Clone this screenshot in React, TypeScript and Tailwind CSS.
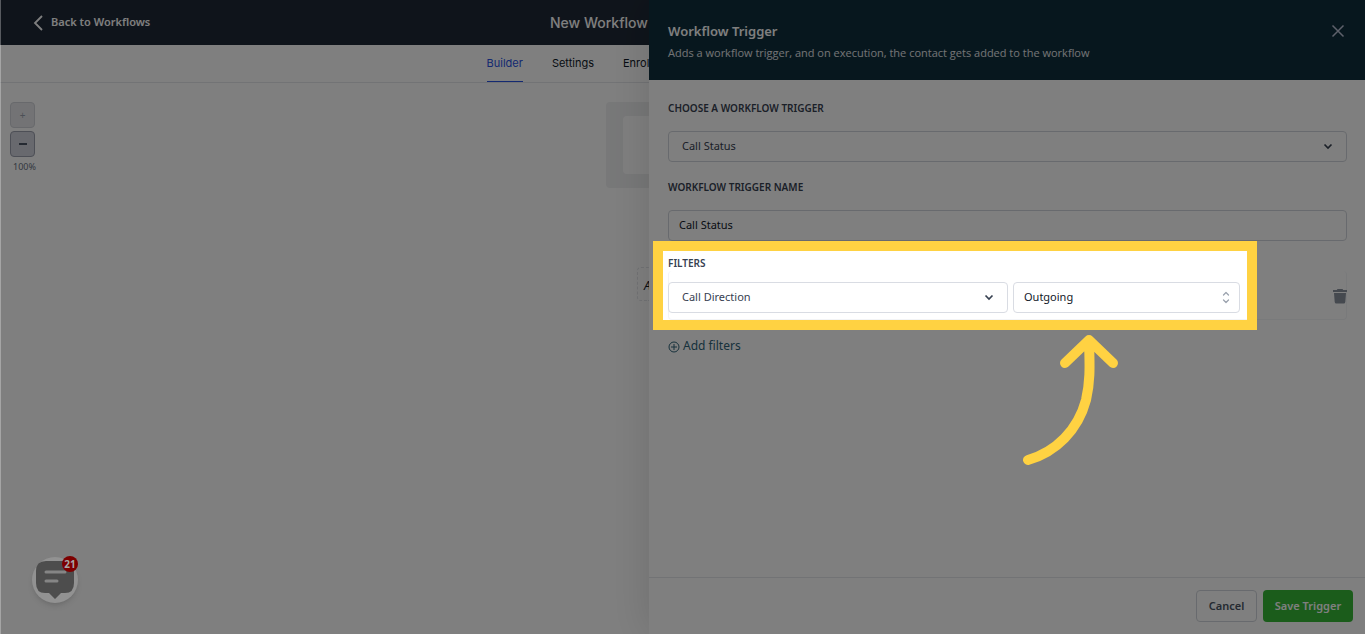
import { useState } from "react";
import type { ReactNode } from "react";

const tabs = ["Builder", "Settings"];

function ChevronDown() {
  return (
    <svg
      viewBox="0 0 10 10"
      className="pointer-events-none absolute right-3.5 top-2.5 size-2.5"
      fill="none"
      stroke="#374151"
      strokeWidth="1.7"
      aria-hidden="true"
    >
      <path d="M1.500 3.500L5 7l3.500-3.500" />
    </svg>
  );
}

function ChevronUpDown() {
  return (
    <svg
      viewBox="0 0 8 14"
      className="pointer-events-none absolute right-2.5 top-2 h-3.5 w-2"
      fill="none"
      stroke="#9ca3af"
      strokeWidth="1.3"
      strokeLinecap="round"
      strokeLinejoin="round"
      aria-hidden="true"
    >
      <path d="M1.500 5L4 2.500 6.500 5M1.500 10L4 12.500 6.500 10" />
    </svg>
  );
}

function Label({ htmlFor, children }: { htmlFor: string; children: ReactNode }) {
  return (
    <label
      htmlFor={htmlFor}
      className="block text-[10px] font-semibold uppercase leading-4 text-[#374151]"
    >
      {children}
    </label>
  );
}

function Workspace() {
  const [active, setActive] = useState("Builder");

  return (
    <main className="relative flex min-w-0 flex-1 flex-col overflow-hidden bg-white">
      <header className="flex h-[45px] items-center justify-between bg-[#1f2937] pl-[33px] text-white">
        <a href="#workflows" className="flex items-center gap-2 text-[11px] font-semibold">
          <svg viewBox="0 0 10 16" className="h-4 w-2.5" fill="none" stroke="currentColor" strokeWidth="1.8" aria-hidden="true">
            <path d="M9 1L2 8l7 7" />
          </svg>
          Back to Workflows
        </a>
        <h1 className="w-[99px] whitespace-nowrap font-[Inter,sans-serif] text-sm font-medium">
          New Workflow
        </h1>
      </header>

      <nav className="flex h-[38px] justify-end border-b border-gray-200 font-[Inter,sans-serif] text-[11px]">
        {tabs.map((tab) => (
          <button
            key={tab}
            onClick={() => setActive(tab)}
            className={
              active === tab
                ? "mr-[29px] border-b border-[#2952e3] text-[#2952e3]"
                : "mr-[29px] border-b border-transparent text-gray-900"
            }
          >
            {tab}
          </button>
        ))}
        <button className="w-[26px] overflow-hidden whitespace-nowrap text-left text-gray-900">
          Enrol
        </button>
      </nav>

      <div className="flex flex-1 items-start justify-between pl-2.5 pt-[19px]">
        <div className="flex flex-col gap-[3px]">
          <button
            aria-label="Zoom in"
            disabled
            className="flex h-[26px] w-[25px] items-center justify-center rounded-sm border border-[#d0d2d8] bg-[#e6e7ea] text-[10px] text-gray-400"
          >
            +
          </button>
          <button
            aria-label="Zoom out"
            className="flex h-[26px] w-[25px] items-center justify-center rounded-sm border border-[#9a9eac] bg-[#d0d2dc]"
          >
            <span className="h-0.5 w-2 bg-gray-600" />
          </button>
          <span className="pl-[3px] text-[9px] leading-3.5 text-gray-500">100%</span>
        </div>

        <div className="flex flex-col items-end">
          <div className="h-[86px] w-[43px] rounded-l bg-[#f0f1f2] py-3.5 pl-[17px]">
            <div className="h-full rounded-l bg-white" />
          </div>
          <div className="mt-[79px] h-[34px] w-3 overflow-hidden rounded-l border border-r-0 border-dashed border-gray-200 pl-1.5 text-xs italic leading-9 text-gray-900">
            A
          </div>
        </div>
      </div>
    </main>
  );
}

function ChatLauncher() {
  return (
    <button
      aria-label="Open chat, 21 unread"
      className="absolute bottom-[31px] left-8 z-20 size-[46px] rounded-full bg-[#929292] shadow-md"
    >
      <svg viewBox="0 0 46 46" className="size-full" aria-hidden="true">
        <path
          d="M14 4h18q10 0 10 10v12q0 10-9 10h-4l-6 6-6-6h-4q-9 0-9-10V14q0-10 10-10z"
          fill="#4d4d4d"
        />
        <path d="M14 15h19M14 24h11" stroke="#858585" strokeWidth="3" strokeLinecap="round" />
      </svg>
      <span className="absolute right-0 -top-px flex size-4 items-center justify-center rounded-full bg-[#7d0000] text-[10px] font-bold text-[#a8a8a8]">
        21
      </span>
    </button>
  );
}

// Highlights the filter row and dims everything around it
function Spotlight() {
  return (
    <>
      <div className="pointer-events-none absolute -left-[15px] -top-2.5 right-[90px] h-[89px] border-10 border-[#ffd242] shadow-[0_0_0_3000px_rgba(0,0,0,0.5)]" />
      <svg
        viewBox="0 0 100 140"
        className="pointer-events-none absolute right-[227px] top-20 h-[140px] w-[100px]"
        fill="none"
        stroke="#ffd242"
        strokeWidth="10"
        strokeLinecap="round"
        strokeLinejoin="round"
        aria-hidden="true"
      >
        <path d="M45 32L69 9l24 23M69 11C70 38 70 52 66 69C58 99 36 121 8 129" />
      </svg>
    </>
  );
}

function TriggerDrawer() {
  const [name, setName] = useState("Call Status");

  return (
    <aside className="relative z-10 flex w-[716px] shrink-0 flex-col bg-white shadow-[0_0_40px_rgba(0,0,0,0.14)]">
      <header className="flex h-20 items-start justify-between bg-[#0e2e3c] pl-[19px] pr-5 pt-[22px] text-white">
        <div>
          <h2 className="text-[13px] font-semibold leading-[18px]">Workflow Trigger</h2>
          <p className="mt-1 font-['Open_Sans',sans-serif] text-[11px] leading-[18px] text-gray-200">
            Adds a workflow trigger, and on execution, the contact gets added to the workflow
          </p>
        </div>
        <button aria-label="Close" className="mt-0.5">
          <svg viewBox="0 0 14 14" className="size-3.5" fill="none" stroke="#bcc3d6" strokeWidth="1.5" aria-hidden="true">
            <path d="M1.500 1.500l11 11M12.500 1.500l-11 11" />
          </svg>
        </button>
      </header>

      <form className="flex flex-1 flex-col" onSubmit={(e) => e.preventDefault()}>
        <div className="flex-1 pl-[19px] pr-[18px] pt-5 text-[11px]">
          <Label htmlFor="trigger">Choose a workflow trigger</Label>
          <div className="relative mt-[15px]">
            <select
              id="trigger"
              className="block h-[31px] w-full appearance-none rounded border border-gray-300 bg-white px-[13px] text-[#374151]"
            >
              <option>Call Status</option>
            </select>
            <ChevronDown />
          </div>

          <div className="mt-[17px]">
            <Label htmlFor="trigger-name">Workflow trigger name</Label>
          </div>
          <input
            id="trigger-name"
            value={name}
            onChange={(e) => setName(e.target.value)}
            className="mt-[15px] block h-[31px] w-full rounded-sm border border-gray-300 bg-white px-2.5 pb-0.5 text-gray-900"
          />

          <section className="relative mt-2.5 pt-1">
            <Label htmlFor="filter-field">Filters</Label>
            <div className="flex items-start rounded border border-t-0 border-gray-100 pb-1.5 pt-[11px]">
              <div className="relative -ml-px w-[340px]">
                <select
                  id="filter-field"
                  className="block h-[31px] w-full appearance-none rounded border border-[#d9dce3] bg-white px-[13px] text-[#374151]"
                >
                  <option>Call Direction</option>
                </select>
                <ChevronDown />
              </div>
              <div className="relative ml-[5px] w-[227px]">
                <select
                  aria-label="Filter value"
                  className="block h-[31px] w-full appearance-none rounded border border-[#d9dce3] bg-white px-2.5 text-gray-900"
                >
                  <option>Outgoing</option>
                </select>
                <ChevronUpDown />
              </div>
              <button type="button" aria-label="Delete filter" className="-mr-px ml-auto mt-1.5">
                <svg viewBox="0 0 14 16" className="h-4 w-3.5" fill="#8a929f" aria-hidden="true">
                  <path d="M4.500 1h5l.7 1H14v2H0V2h3.800zM1 5h12l-.7 9q-.2 1.500-1.500 1.500H3.200q-1.300 0-1.500-1.500z" />
                </svg>
              </button>
            </div>
            <Spotlight />
          </section>

          <button type="button" className="mt-4 flex items-center gap-[3px] text-xs leading-5 text-[#2e6379]">
            <svg viewBox="0 0 12 12" className="mt-0.5 size-3" fill="none" stroke="currentColor" aria-hidden="true">
              <circle cx="6" cy="6" r="5" />
              <path d="M6 3v6M3 6h6" />
            </svg>
            Add filters
          </button>
        </div>

        <footer className="flex h-[57px] justify-end gap-1.5 border-t border-gray-200 pr-3 pt-3 text-[11px] font-semibold">
          <button
            type="button"
            className="h-8 w-[61px] rounded-sm border border-gray-300 bg-white text-gray-600"
          >
            Cancel
          </button>
          <button className="h-8 w-[90px] rounded-sm bg-[#37b837] text-white">Save Trigger</button>
        </footer>
      </form>
    </aside>
  );
}

export default function App() {
  return (
    <div className="relative flex min-h-screen overflow-hidden bg-white font-['Noto_Sans',sans-serif]">
      <Workspace />
      <TriggerDrawer />
      <ChatLauncher />
      <div className="absolute inset-y-0 left-0 z-20 w-px bg-white/30" />
    </div>
  );
}
